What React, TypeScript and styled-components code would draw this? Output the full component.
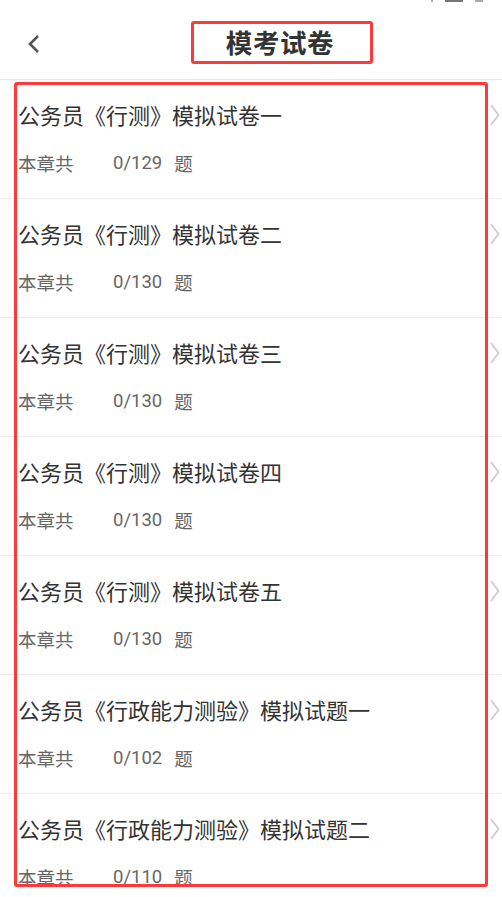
import React from 'react';
import styled, { createGlobalStyle } from 'styled-components';

const GlobalStyle = createGlobalStyle`
  html, body {
    margin: 0;
    padding: 0;
    background: #ffffff;
  }
  body {
    font-family: Roboto, "Noto Sans CJK SC", "Noto Sans", sans-serif;
  }
  * {
    box-sizing: border-box;
  }
`;

const papers = [
  { name: '公务员《行测》模拟试卷一', done: 0, total: 129 },
  { name: '公务员《行测》模拟试卷二', done: 0, total: 130 },
  { name: '公务员《行测》模拟试卷三', done: 0, total: 130 },
  { name: '公务员《行测》模拟试卷四', done: 0, total: 130 },
  { name: '公务员《行测》模拟试卷五', done: 0, total: 130 },
  { name: '公务员《行政能力测验》模拟试题一', done: 0, total: 102 },
  { name: '公务员《行政能力测验》模拟试题二', done: 0, total: 110 },
];

const App = () => {
  return (
    <>
      <GlobalStyle />
      <Screen>
        <StatusRemnant>
          <StatusBit w={2} />
          <StatusBit w={18} dark />
          <StatusBit w={8} />
        </StatusRemnant>
        <Header>
          <BackButton>
            <svg width="14" height="20" viewBox="0 0 14 20">
              <polyline
                points="11,2 3,10 11,18"
                fill="none"
                stroke="#555"
                strokeWidth="2.6"
              />
            </svg>
          </BackButton>
          <Title>模考试卷</Title>
        </Header>
        <ListViewport>
          {papers.map((p) => (
            <PaperRow key={p.name}>
              <PaperTitleLine>
                <PaperName>{p.name}</PaperName>
                <Chevron>
                  <svg width="10" height="24" viewBox="0 0 10 24">
                    <polyline
                      points="1,2 8.5,12 1,22"
                      fill="none"
                      stroke="#cacaca"
                      strokeWidth="1.6"
                    />
                  </svg>
                </Chevron>
              </PaperTitleLine>
              <PaperMeta>
                <MetaLabel>本章共</MetaLabel>
                <MetaCount>
                  {p.done}/{p.total}
                </MetaCount>
                <MetaUnit>题</MetaUnit>
              </PaperMeta>
            </PaperRow>
          ))}
        </ListViewport>
        <Highlight top={21} left={191} width={182} height={43} />
        <Highlight top={82} left={14} width={474} height={805} />
      </Screen>
    </>
  );
};

export default App;

const Screen = styled.div`
  position: relative;
  width: 502px;
  height: 897px;
  overflow: hidden;
  background: #ffffff;
`;

const StatusRemnant = styled.div`
  position: absolute;
  top: 0;
  left: 431px;
  display: flex;
  gap: 12px;
`;

const StatusBit = styled.div<{ w: number; dark?: boolean }>`
  width: ${(p) => p.w}px;
  height: 2px;
  background: ${(p) => (p.dark ? '#777' : '#aaa')};
`;

const Header = styled.header`
  height: 80px;
  display: flex;
  align-items: center;
  justify-content: center;
  position: relative;
  border-bottom: 1px solid #e9e9e9;
  padding-top: 4px;
`;

const BackButton = styled.div`
  position: absolute;
  left: 27px;
  top: 34px;
  width: 14px;
  height: 20px;
  display: flex;
`;

const Title = styled.h1`
  margin: 0;
  font-size: 26.5px;
  font-weight: 700;
  color: #333333;
  letter-spacing: 0.6px;
  transform: translateX(29px);
`;

const ListViewport = styled.div`
  height: 805px;
  overflow: hidden;
`;

const PaperRow = styled.div`
  height: 119px;
  border-bottom: 1px solid #ececec;
  padding: 19px 2px 0 18px;
  display: flex;
  flex-direction: column;
`;

const PaperTitleLine = styled.div`
  display: flex;
  align-items: center;
  height: 30px;
`;

const PaperName = styled.div`
  font-size: 22px;
  color: #333333;
  white-space: nowrap;
`;

const Chevron = styled.div`
  margin-left: auto;
  display: flex;
  margin-top: 2px;
`;

const PaperMeta = styled.div`
  display: flex;
  align-items: center;
  margin-top: 21px;
  height: 26px;
  font-size: 18.5px;
  color: #666666;
`;

const MetaLabel = styled.span`
  width: 95px;
`;

const MetaCount = styled.span`
  margin-right: 12px;
`;

const MetaUnit = styled.span``;

const Highlight = styled.div<{
  top: number;
  left: number;
  width: number;
  height: number;
}>`
  position: absolute;
  top: ${(p) => p.top}px;
  left: ${(p) => p.left}px;
  width: ${(p) => p.width}px;
  height: ${(p) => p.height}px;
  border: 3px solid #fc3a3a;
  border-radius: 3px;
  pointer-events: none;
`;
